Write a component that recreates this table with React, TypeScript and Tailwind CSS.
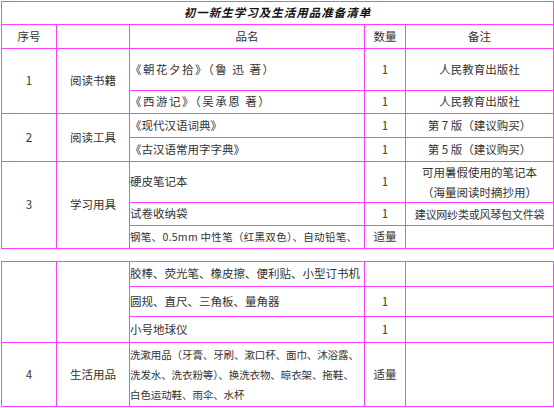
import React from 'react';

const td = 'border border-[#ff3dff] p-0 align-middle';

export default function App() {
  return (
    <div className="w-[554px] h-[408px] bg-white overflow-hidden text-[11.5px] text-[#333] [font-family:'Noto_Sans_CJK_SC','Noto_Sans',sans-serif]">
      <div className="pl-[1px] pt-[1px]">
        {/* First table */}
        <table className="table-fixed border-collapse w-[552px]">
          <colgroup>
            <col className="w-[55px]" />
            <col className="w-[73px]" />
            <col className="w-[235px]" />
            <col className="w-[41px]" />
            <col className="w-[148px]" />
          </colgroup>
          <tbody>
            <tr className="h-[23px]">
              <td colSpan={5} className={`${td} text-center`}>
                <span className="font-bold italic text-[11.5px] tracking-[1px] text-[#111]">初一新生学习及生活用品准备清单</span>
              </td>
            </tr>
            <tr className="h-[24px]">
              <td className={`${td} text-center`}>序号</td>
              <td className={td}></td>
              <td className={`${td} text-center`}>品名</td>
              <td className={`${td} text-center`}>数量</td>
              <td className={`${td} text-center`}>备注</td>
            </tr>
            <tr className="h-[42px]">
              <td rowSpan={2} className={`${td} text-center`}>1</td>
              <td rowSpan={2} className={`${td} text-center`}>阅读书籍</td>
              <td className={`${td} tracking-[1.5px]`}>《朝花夕拾》（鲁 迅 著）</td>
              <td className={`${td} text-center`}>1</td>
              <td className={`${td} text-center`}>人民教育出版社</td>
            </tr>
            <tr className="h-[23px]">
              <td className={`${td} tracking-[1.5px]`}>《西游记》（吴承恩 著）</td>
              <td className={`${td} text-center`}>1</td>
              <td className={`${td} text-center`}>人民教育出版社</td>
            </tr>
            <tr className="h-[24px]">
              <td rowSpan={2} className={`${td} text-center`}>2</td>
              <td rowSpan={2} className={`${td} text-center`}>阅读工具</td>
              <td className={td}>《现代汉语词典》</td>
              <td className={`${td} text-center`}>1</td>
              <td className={`${td} text-center`}>第 7 版（建议购买）</td>
            </tr>
            <tr className="h-[24px]">
              <td className={td}>《古汉语常用字字典》</td>
              <td className={`${td} text-center`}>1</td>
              <td className={`${td} text-center`}>第 5 版（建议购买）</td>
            </tr>
            <tr className="h-[41px]">
              <td rowSpan={3} className={`${td} text-center`}>3</td>
              <td rowSpan={3} className={`${td} text-center`}>学习用具</td>
              <td className={td}>硬皮笔记本</td>
              <td className={`${td} text-center`}>1</td>
              <td className={`${td} text-center leading-[20px]`}>
                可用暑假使用的笔记本<br />（海量阅读时摘抄用）
              </td>
            </tr>
            <tr className="h-[23px]">
              <td className={td}>试卷收纳袋</td>
              <td className={`${td} text-center`}>1</td>
              <td className={`${td} text-center whitespace-nowrap text-[11px] tracking-[-0.2px]`}>建议网纱类或风琴包文件袋</td>
            </tr>
            <tr className="h-[23px]">
              <td className={`${td} whitespace-nowrap overflow-hidden text-[10.5px] tracking-[0.3px]`}>钢笔、0.5mm 中性笔（红黑双色）、自动铅笔、</td>
              <td className={`${td} text-center`}>适量</td>
              <td className={td}></td>
            </tr>
          </tbody>
        </table>

        {/* Second table */}
        <table className="table-fixed border-collapse w-[552px] mt-[12px]">
          <colgroup>
            <col className="w-[55px]" />
            <col className="w-[73px]" />
            <col className="w-[235px]" />
            <col className="w-[41px]" />
            <col className="w-[148px]" />
          </colgroup>
          <tbody>
            <tr className="h-[25px]">
              <td rowSpan={3} className={td}></td>
              <td rowSpan={3} className={td}></td>
              <td className={`${td} whitespace-nowrap`}>胶棒、荧光笔、橡皮擦、便利贴、小型订书机</td>
              <td className={td}></td>
              <td className={td}></td>
            </tr>
            <tr className="h-[30px]">
              <td className={td}>圆规、直尺、三角板、量角器</td>
              <td className={`${td} text-center`}>1</td>
              <td className={td}></td>
            </tr>
            <tr className="h-[26px]">
              <td className={td}>小号地球仪</td>
              <td className={`${td} text-center`}>1</td>
              <td className={td}></td>
            </tr>
            <tr className="h-[64px]">
              <td className={`${td} text-center`}>4</td>
              <td className={`${td} text-center`}>生活用品</td>
              <td className={`${td} whitespace-nowrap overflow-hidden leading-[20px] text-[10.5px] tracking-[-0.1px]`}>
                洗漱用品（牙膏、牙刷、漱口杯、面巾、沐浴露、<br />
                洗发水、洗衣粉等）、换洗衣物、晾衣架、拖鞋、<br />
                白色运动鞋、雨伞、水杯
              </td>
              <td className={`${td} text-center`}>适量</td>
              <td className={td}></td>
            </tr>
          </tbody>
        </table>
      </div>
    </div>
  );
}
